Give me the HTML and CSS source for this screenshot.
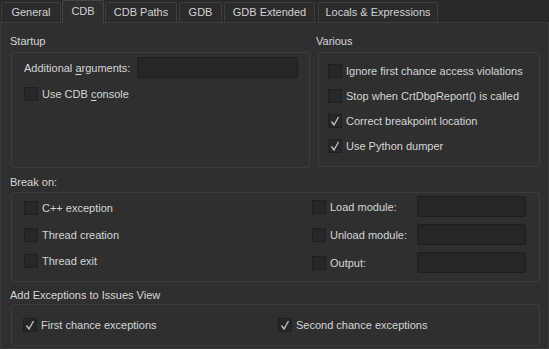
FILE: index.html
```html
<!DOCTYPE html>
<html lang="en">
<head>
  <meta charset="UTF-8" />
  <title>CDB Options</title>
  <link rel="stylesheet" href="styles.css">
</head>
<body>
  <div class="tabbar">
    <div class="tab tab-general">General</div>
    <div class="tab tab-cdb active">CDB</div>
    <div class="tab tab-paths">CDB Paths</div>
    <div class="tab tab-gdb">GDB</div>
    <div class="tab tab-gdbext">GDB Extended</div>
    <div class="tab tab-locals">Locals &amp; Expressions</div>
  </div>

  <div class="pane">
    <div class="top-row">
      <section class="startup">
        <div class="group-title">Startup</div>
        <div class="group startup-box">
          <div class="field-row">
            <span class="label">Additional <u>a</u>rguments:</span>
            <div class="textbox grow"></div>
          </div>
          <div class="check"><span class="box"></span><span>Use CDB <u>c</u>onsole</span></div>
        </div>
      </section>

      <section class="various">
        <div class="group-title">Various</div>
        <div class="group various-box">
          <div class="check"><span class="box"></span><span>Ignore first chance access violations</span></div>
          <div class="check"><span class="box"></span><span>Stop when CrtDbgReport() is called</span></div>
          <div class="check"><span class="box checked"><svg viewBox="0 0 12 12"><path d="M2.5 6.5 L5 10 L9.5 2" /></svg></span><span>Correct breakpoint location</span></div>
          <div class="check"><span class="box checked"><svg viewBox="0 0 12 12"><path d="M2.5 6.5 L5 10 L9.5 2" /></svg></span><span>Use Python dumper</span></div>
        </div>
      </section>
    </div>

    <section class="break-on">
      <div class="group-title">Break on:</div>
      <div class="group break-box">
        <div class="break-left">
          <div class="check"><span class="box"></span><span>C++ exception</span></div>
          <div class="check"><span class="box"></span><span>Thread creation</span></div>
          <div class="check"><span class="box"></span><span>Thread exit</span></div>
        </div>
        <div class="break-right">
          <div class="module-row"><span class="box"></span><span class="label">Load module:</span><div class="textbox module-input"></div></div>
          <div class="module-row"><span class="box"></span><span class="label">Unload module:</span><div class="textbox module-input"></div></div>
          <div class="module-row"><span class="box"></span><span class="label">Output:</span><div class="textbox module-input"></div></div>
        </div>
      </div>
    </section>

    <section class="issues">
      <div class="group-title">Add Exceptions to Issues View</div>
      <div class="group issues-box">
        <div class="check"><span class="box checked"><svg viewBox="0 0 12 12"><path d="M2.5 6.5 L5 10 L9.5 2" /></svg></span><span>First chance exceptions</span></div>
        <div class="check"><span class="box checked"><svg viewBox="0 0 12 12"><path d="M2.5 6.5 L5 10 L9.5 2" /></svg></span><span>Second chance exceptions</span></div>
      </div>
    </section>
  </div>
</body>
</html>
```

FILE: styles.css
```css
* { box-sizing: border-box; }

body {
  margin: 0;
  width: 549px;
  height: 349px;
  overflow: hidden;
  background: #282828;
  color: #d6d6d6;
  font-family: "Liberation Sans", Arial, sans-serif;
  font-size: 11px;
}

u { text-decoration: underline; text-underline-offset: 2px; }

/* tabs */
.tabbar {
  display: flex;
  align-items: flex-end;
  height: 22px;
  padding-left: 1px;
}

.tab {
  height: 20px;
  margin-right: 2px;
  border: 1px solid #3e3e3e;
  border-bottom: none;
  border-radius: 2px 2px 0 0;
  background: #2b2b2b;
  color: #d2d2d2;
  text-align: center;
  line-height: 19px;
}

.tab.active {
  position: relative;
  z-index: 1;
  height: 23px;
  margin-bottom: -1px;
  background: #2f2f2f;
  line-height: 20px;
  border-color: #444;
}

.tab-general { width: 60px; margin-right: 1px; }
.tab-cdb { width: 42px; margin-right: 1px; }
.tab-paths { width: 72px; margin-right: 2px; }
.tab-gdb { width: 43px; margin-right: 2px; }
.tab-gdbext { width: 91px; margin-right: 3px; }
.tab-locals { width: 120px; }

/* pane */
.pane {
  height: 327px;
  border: 1px solid #3b3b3b;
  background: #2f2f2f;
  padding: 10px 8px 0 9px;
}

.group-title {
  height: 16px;
  line-height: 16px;
  margin-bottom: 3px;
  color: #d8d8d8;
}

.group {
  border: 1px solid #3c3c3c;
  border-radius: 2px;
}

.top-row {
  display: grid;
  grid-template-columns: 300px 224px;
  gap: 6px;
}

.startup-box {
  margin-left: 1px;
  height: 116px;
  padding: 4px 11px 0 12px;
}

.various-box {
  margin-left: 2px;
  height: 115px;
  padding: 11px 0 0 9px;
  display: flex;
  flex-direction: column;
  gap: 11px;
}

.field-row {
  display: flex;
  align-items: center;
  gap: 7px;
  margin-bottom: 9px;
}

.grow { flex: 1; }

.textbox {
  height: 21px;
  background: #262626;
  border: 1px solid #1d1d1d;
  border-radius: 2px;
}

.check {
  display: flex;
  align-items: center;
  gap: 4px;
  height: 14px;
  white-space: nowrap;
}

.box {
  flex: none;
  width: 14px;
  height: 14px;
  background: #272727;
  border: 1px solid #1f1f1f;
  display: flex;
}

.box svg {
  width: 12px;
  height: 12px;
  fill: none;
  stroke: #c4c4c4;
  stroke-width: 1.3;
}

/* break on */
.break-on { margin-top: 6px; }

.break-on .group-title { margin-bottom: 2px; }

.break-box {
  margin-left: 1px;
  height: 90px;
  display: grid;
  grid-template-columns: 300px 1fr;
  padding-right: 13px;
}

.break-left {
  padding: 8px 0 0 12px;
  display: flex;
  flex-direction: column;
  gap: 12.5px;
}

.break-right {
  padding-top: 3px;
  display: flex;
  flex-direction: column;
  gap: 7px;
}

.module-row {
  display: flex;
  align-items: center;
  gap: 4px;
}

.module-row .label { flex: 1; }
.module-input { width: 109px; }

/* issues */
.issues { margin-top: 5px; }

.issues .group-title { margin-bottom: 1px; }

.issues-box {
  margin-left: 1px;
  height: 42px;
  display: grid;
  grid-template-columns: 255px 1fr;
  align-items: center;
  padding-left: 11px;
}
```
